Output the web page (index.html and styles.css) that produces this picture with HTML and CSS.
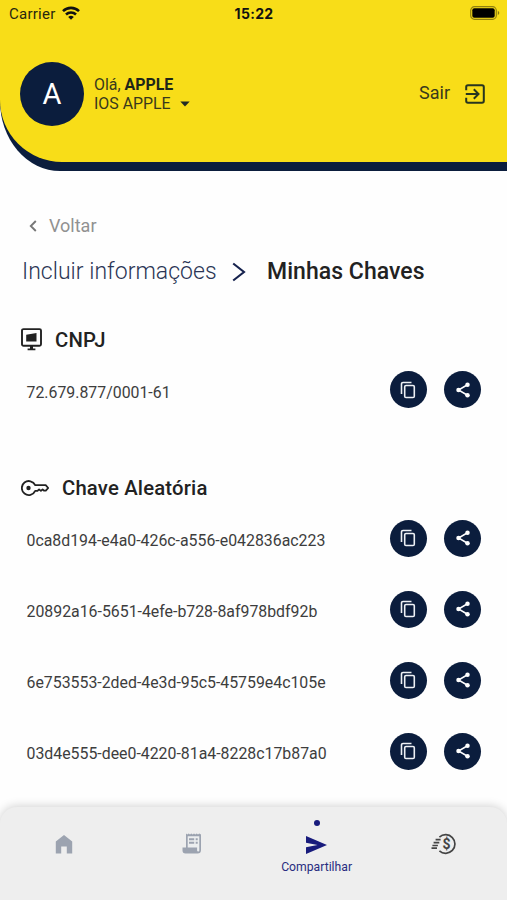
FILE: index.html
```html
<!DOCTYPE html>
<html lang="pt-BR">
<head>
<meta charset="utf-8">
<title>Minhas Chaves</title>
<link rel="stylesheet" href="styles.css">
</head>
<body>
<svg width="0" height="0" class="defs">
  <symbol id="copy" viewBox="0 0 16 18"><path fill="none" stroke="currentColor" stroke-width="1.6" d="M1.500 13V3a1.500 1.500 0 0 1 1.500-1.500h8.500M6 4.500h7A1.300 1.300 0 0 1 14.300 5.800v9.400a1.300 1.300 0 0 1-1.300 1.300H6a1.300 1.300 0 0 1-1.300-1.300V5.800A1.300 1.300 0 0 1 6 4.500z"/></symbol>
  <symbol id="share" viewBox="0 0 24 24"><path fill="none" stroke="currentColor" stroke-width="2" d="M18 5 6 12l12 7"/><g fill="currentColor"><circle cx="18" cy="5" r="3"/><circle cx="6" cy="12" r="3"/><circle cx="18" cy="19" r="3"/></g></symbol>
</svg>
<div class="screen">
  <header class="header">
    <div class="header-face">
      <div class="status">
        <div class="carrier"><span>Carrier</span>
          <svg width="18" height="14" viewBox="0 0 18 14"><g fill="none" stroke="#111" stroke-width="2.600"><path d="M1 5.100a11.600 11.600 0 0 1 16 0"/><path d="M4 8.500a7.300 7.300 0 0 1 10 0"/></g><path fill="#111" d="M6.200 11a4.100 4.100 0 0 1 5.600 0L9 13.800z"/></svg>
        </div>
        <div class="clock">15:22</div>
        <svg class="battery" width="30" height="14" viewBox="0 0 30 14"><rect x=".7" y=".7" width="25.600" height="12.600" rx="3.800" fill="none" stroke="#000" stroke-opacity=".42" stroke-width="1.200"/><rect x="2.300" y="2.300" width="22.400" height="9.400" rx="2"/><path d="M27.800 4.800q3 2.200 0 4.400z" fill-opacity=".45"/></svg>
      </div>
      <div class="profile">
        <div class="avatar">A</div>
        <div class="who">
          <div class="hello">Olá, <b>APPLE</b></div>
          <div class="company"><span>IOS APPLE</span><svg width="10" height="6" viewBox="0 0 10 6"><path d="M.3.4h9.400L5 5.600z" fill="#222b24"/></svg></div>
        </div>
        <div class="logout"><span>Sair</span>
          <svg width="20" height="20" viewBox="0 0 20 20" fill="none" stroke="#27351f" stroke-width="2"><path d="M1.200 6.200V3a1.800 1.800 0 0 1 1.800-1.800h14A1.800 1.800 0 0 1 18.800 3v14a1.800 1.800 0 0 1-1.800 1.800H3A1.800 1.800 0 0 1 1.200 17v-3.200M.8 10h12.400M8.800 5.300l4.700 4.700-4.700 4.700"/></svg>
        </div>
      </div>
    </div>
  </header>

  <main class="content">
    <div class="back"><svg width="8" height="12" viewBox="0 0 8 12"><path d="M6.800 1 1.800 6l5 5" fill="none" stroke="#777" stroke-width="1.900"/></svg><span>Voltar</span></div>
    <div class="crumbs">
      <span class="crumb-link">Incluir informações</span>
      <svg width="14" height="20" viewBox="0 0 14 20"><path d="m1.200 1.500 10.800 8.500L1.200 18.500" fill="none" stroke="#16224e" stroke-width="2.100"/></svg>
      <span class="crumb-current">Minhas Chaves</span>
    </div>

    <section class="cnpj">
      <h2><svg width="21" height="23" viewBox="0 0 21 23"><rect x="1" y="1.100" width="19" height="16.600" rx="1.500" fill="none" stroke="#222" stroke-width="1.900"/><path fill="#222" d="M5.200 6.700 15.500 4.900v8.700H5.200zM9 18h3v2.500h2.400v1.800H6.600v-1.800H9z"/></svg><span>CNPJ</span></h2>
      <div class="key-row"><span class="tax-id">72.679.877/0001-61</span><button><svg class="copy"><use href="#copy"/></svg></button><button><svg class="share"><use href="#share"/></svg></button></div>
    </section>

    <section class="random">
      <h2><svg width="28" height="16" viewBox="0 0 28 16"><path d="M14.200 5.200h10.500L27.200 8l-2.400 2.700h-1.700l-1.500-1.300-1.700 1.500-1.800-1.500-1.600 1.500h-2.300a7 7 0 1 1 0-5.700z" fill="none" stroke="#222" stroke-width="1.800" stroke-linejoin="round"/><circle cx="7.500" cy="8" r="2.200" fill="#222"/></svg><span>Chave Aleatória</span></h2>
      <div class="key-row"><span>0ca8d194-e4a0-426c-a556-e042836ac223</span><button><svg class="copy"><use href="#copy"/></svg></button><button><svg class="share"><use href="#share"/></svg></button></div>
      <div class="key-row"><span>20892a16-5651-4efe-b728-8af978bdf92b</span><button><svg class="copy"><use href="#copy"/></svg></button><button><svg class="share"><use href="#share"/></svg></button></div>
      <div class="key-row"><span>6e753553-2ded-4e3d-95c5-45759e4c105e</span><button><svg class="copy"><use href="#copy"/></svg></button><button><svg class="share"><use href="#share"/></svg></button></div>
      <div class="key-row"><span>03d4e555-dee0-4220-81a4-8228c17b87a0</span><button><svg class="copy"><use href="#copy"/></svg></button><button><svg class="share"><use href="#share"/></svg></button></div>
    </section>
  </main>

  <nav class="tabs">
    <div class="tab"><svg width="18" height="20" viewBox="0 0 18 20"><path fill="#9ca3b0" d="M.8 7.500 9 1l8.200 6.500V19.500h-5.400v-7H6.200v7H.8z"/></svg></div>
    <div class="tab receipt"><svg width="20" height="21" viewBox="0 0 20 21"><path fill="#9ca3b0" d="m4 .5 1.300 1L6.700.5 8 1.500 9.300.5l1.400 1 1.300-1 1.300 1 1.400-1 1.300 1L17.300.5l1.700 1V17a3.500 3.500 0 0 1-3.500 3.500h-12A3 3 0 0 1 .5 17.500v-3H4z"/><path fill="#eceeef" d="M5.700 3.300h11.600V17.500a1.100 1.100 0 0 1-2.200 0v-3H5.700z"/><path fill="#9ca3b0" d="M7 5.200h5.200v2H7zm6.700 0h2v2h-2zM7 8.800h5.200v2H7zm6.700 0h2v2h-2z"/></svg></div>
    <div class="tab active"><i class="dot"></i><svg width="21" height="18" viewBox="0 0 21 18"><path fill="#181b7c" d="m0 0 21 9L0 18v-6.800L11.500 9 0 6.800z"/></svg><span>Compartilhar</span></div>
    <div class="tab transfer"><svg class="money" width="26" height="22" viewBox="0 0 26 22"><path d="M8.400 4.100A9.300 9.300 0 1 1 8.400 17.900M4.600 6.700h5M2.600 9.600h5.700M1.400 12.500h5.500M.5 15.200h5.500" fill="none" stroke="#444" stroke-width="1.700"/><text x="15.400" y="16" text-anchor="middle">$</text></svg></div>
  </nav>
</div>
</body>
</html>
```
FILE: styles.css
```css
* { box-sizing: border-box; }
body { margin: 0; background: #fefefe; font-family: Roboto, "Liberation Sans", sans-serif; color: #222; }
.defs { position: absolute; }
.screen { width: 507px; height: 900px; display: flex; flex-direction: column; overflow: hidden; }
svg { display: block; flex: none; }

.header { height: 170.5px; flex: none; background: #0b1d3d; border-bottom-left-radius: 60px 70px; }
.header-face { height: 162px; background: #f8dd18; border-bottom-left-radius: 62px 62px; }
.status { height: 28px; display: grid; grid-template-columns: 1fr auto 1fr; align-items: center; padding: 0 7px 0 9px; font-size: 15px; color: #27270f; }
.carrier { display: flex; align-items: center; gap: 6px; letter-spacing: .25px; }
.carrier svg { margin-top: -2px; }
.clock { font-family: Inter, Roboto, sans-serif; font-size: 14px; font-weight: 700; letter-spacing: .3px; color: #111; margin: -2px 0 0 -1px; }
.battery { justify-self: end; margin-top: -2px; }
.profile { display: flex; align-items: center; padding: 34px 22px 0 20px; }
.avatar { width: 64px; height: 64px; border-radius: 50%; background: #0b1d3d; color: #fff; display: flex; align-items: center; justify-content: center; font-size: 29px; }
.who { margin-left: 10px; font-size: 15.9px; line-height: 19.5px; color: #39391c; }
.who b { color: #1e2618; }
.company { display: flex; align-items: center; gap: 9px; }
.logout { margin-left: auto; display: flex; align-items: center; gap: 15px; font-size: 18px; color: #39391c; }
.logout span { margin-top: -4px; }

.content { flex: 1; padding: 44px 26px 0 21px; }
.back { height: 22px; display: flex; align-items: center; gap: 12px; padding-left: 8px; font-size: 18px; color: #919191; }
.crumbs { height: 28px; margin-top: 21px; padding-left: 1px; display: flex; align-items: center; font-size: 23px; white-space: nowrap; }
.crumb-link { width: 210px; font-weight: 300; letter-spacing: .03px; color: #2b3555; }
.crumb-current { margin-left: 21px; font-weight: 500; letter-spacing: .05px; }
h2 { height: 24px; margin: 0; display: flex; align-items: center; gap: 13px; font-size: 20.3px; font-weight: 500; letter-spacing: .18px; }
.cnpj { margin-top: 42px; }
.random { margin-top: 68px; }
.key-row { height: 37px; display: flex; align-items: center; gap: 17.5px; padding-left: 5.5px; margin-top: 34px; font-size: 15.87px; color: #3d3d3d; }
.key-row span { margin-right: auto; padding-top: 5px; }
h2 + .key-row { margin-top: 19.5px; }
button { width: 37px; height: 37px; padding: 0; border: 0; border-radius: 50%; background: #0b1d3d; color: #eef1f6; display: flex; align-items: center; justify-content: center; }
.copy { width: 16px; height: 18px; }
.share { width: 18px; height: 18px; color: #fff; }

.tabs { height: 93px; flex: none; padding: 0 1px; display: grid; grid-template-columns: repeat(4, 1fr); background: #eee; border-radius: 17px 17px 0 0; box-shadow: 0 -1px 10px rgba(0, 0, 0, .18); }
.tab { display: flex; flex-direction: column; align-items: center; padding-top: 27px; }
.receipt, .transfer { padding-left: 3px; padding-top: 26px; }
.tab.active { padding-top: 13px; font-size: 12.2px; color: #292c80; }
.dot { width: 6px; height: 6px; border-radius: 50%; background: #181b7c; margin-bottom: 10px; }
.active span { margin-top: 6px; line-height: 15px; }
.money text { font: 700 14px Roboto, sans-serif; fill: #444; }
```
